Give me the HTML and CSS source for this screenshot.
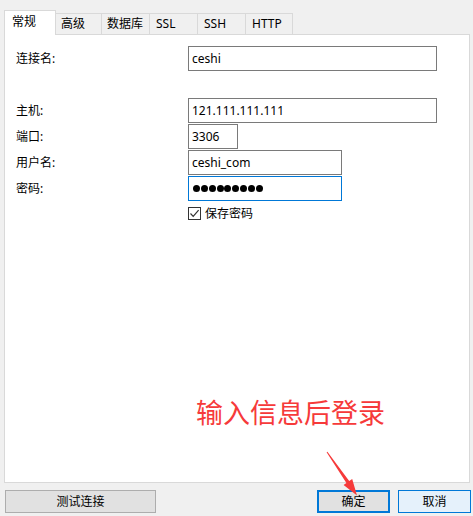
FILE: index.html
```html
<!DOCTYPE html>
<html lang="zh-CN">
<head>
<meta charset="utf-8">
<title>连接</title>
<link rel="stylesheet" href="styles.css">
</head>
<body>
<div class="window">
  <div class="tabs">
    <div class="tab active">常规</div>
    <div class="tab t-46">高级</div>
    <div class="tab">数据库</div>
    <div class="tab latin">SSL</div>
    <div class="tab latin">SSH</div>
    <div class="tab latin t-47">HTTP</div>
  </div>
  <div class="panel">
    <div class="form">
      <div class="row"><span class="label">连接名:</span><div class="input wide">ceshi</div></div>
      <div class="group">
        <div class="row"><span class="label">主机:</span><div class="input wide">121.111.111.111</div></div>
        <div class="row"><span class="label">端口:</span><div class="input port">3306</div></div>
        <div class="row"><span class="label">用户名:</span><div class="input mid">ceshi_com</div></div>
        <div class="row"><span class="label">密码:</span><div class="input mid focus"><span class="dots"><i></i><i></i><i></i><i></i><i></i><i></i><i></i><i></i><i></i></span></div></div>
      </div>
      <div class="check-row">
        <span class="checkbox"><svg viewBox="0 0 13 13" width="13" height="13"><path d="M2.5 6.5 L5.2 9.3 L10.6 3.2" fill="none" stroke="#333" stroke-width="1.2"/></svg></span>
        <span class="check-label">保存密码</span>
      </div>
    </div>
  </div>
  <div class="buttons">
    <button class="btn test">测试连接</button>
    <div class="right">
      <button class="btn ok">确定</button>
      <button class="btn cancel">取消</button>
    </div>
  </div>
  <div class="note">输入信息后登录</div>
  <svg class="arrow" width="473" height="516" viewBox="0 0 473 516">
    <polygon points="326.6,442.3 346.4,472.9 343.6,474.9 357,485.5 352.2,469.1 349.2,471.1 327.4,441.7" fill="#f63a3a"/>
  </svg>
</div>
</body>
</html>
```

FILE: styles.css
```css
html, body {
  margin: 0;
  padding: 0;
  width: 473px;
  height: 516px;
  overflow: hidden;
  background: #f0f0f0;
}

.window {
  position: relative;
  width: 473px;
  height: 516px;
  font-family: "Noto Sans", "Noto Sans CJK SC", sans-serif;
  font-size: 12px;
  color: #000;
}

.tabs {
  display: flex;
  align-items: flex-end;
  height: 24px;
  margin: 10px 0 0 4px;
}

.tab {
  box-sizing: border-box;
  height: 21px;
  width: 48px;
  padding-left: 5px;
  border-top: 1px solid #d9d9d9;
  border-right: 1px solid #d9d9d9;
  background: #f0f0f0;
  display: flex;
  align-items: center;
  line-height: 1;
  white-space: nowrap;
}

.tab.latin { padding-left: 6px; }
.tab.t-46 { width: 46px; }
.tab.t-47 { width: 47px; }

.tab.active {
  position: relative;
  z-index: 1;
  width: 52px;
  height: 25px;
  margin-bottom: -1px;
  padding-left: 7px;
  padding-bottom: 2px;
  border-left: 1px solid #d9d9d9;
  background: #fff;
}

.panel {
  box-sizing: border-box;
  width: 466px;
  height: 449px;
  margin-left: 4px;
  border: 1px solid #d9d9d9;
  background: #fff;
}

.form {
  padding: 11px 0 0 11px;
  display: flex;
  flex-direction: column;
}

.group {
  margin-top: 27px;
  display: flex;
  flex-direction: column;
  gap: 1px;
}

.row {
  display: flex;
  align-items: center;
  height: 25px;
}

.label {
  width: 172px;
  flex: none;
  line-height: 1;
}

.input {
  box-sizing: border-box;
  height: 25px;
  border: 1px solid #7a7a7a;
  padding: 0 0 0 3px;
  display: flex;
  align-items: center;
  line-height: 1;
  background: #fff;
}

.input.wide { width: 249px; }
.input.port { width: 50px; }
.input.mid { width: 154px; }
.input.focus { border-color: #0078d7; }

.dots {
  display: flex;
  gap: 0.85px;
  padding-left: 1px;
}

.dots i {
  display: block;
  width: 7px;
  height: 7px;
  border-radius: 50%;
  background: #000;
}

.check-row {
  display: flex;
  align-items: center;
  margin: 6px 0 0 172px;
  height: 13px;
}

.checkbox {
  box-sizing: border-box;
  width: 13px;
  height: 13px;
  border: 1px solid #333;
  display: flex;
  align-items: center;
  justify-content: center;
  background: #fff;
}

.checkbox svg {
  display: block;
  margin: -1px;
}

.check-label {
  margin-left: 4px;
  line-height: 1;
}

.buttons {
  display: flex;
  justify-content: space-between;
  margin-top: 7px;
  padding: 0 2px 0 5px;
}

.right {
  display: flex;
  gap: 8px;
}

.btn {
  box-sizing: border-box;
  height: 23px;
  font-family: "Noto Sans", "Noto Sans CJK SC", sans-serif;
  font-size: 12px;
  color: #000;
  line-height: 1;
  padding: 0;
  margin: 0;
  background: #e1e1e1;
  border: 1px solid #adadad;
}

.btn.test { width: 151px; }
.btn.ok { width: 73px; border: 2px solid #0078d7; }
.btn.cancel { width: 73px; border-color: #0078d7; background: #e5f1fb; }

.note {
  position: absolute;
  left: 196px;
  top: 388px;
  font-family: "Noto Sans CJK SC", sans-serif;
  font-size: 27px;
  line-height: 1;
  color: #f63a3a;
  white-space: nowrap;
}

.arrow {
  position: absolute;
  left: 0;
  top: 0;
  pointer-events: none;
}
```
